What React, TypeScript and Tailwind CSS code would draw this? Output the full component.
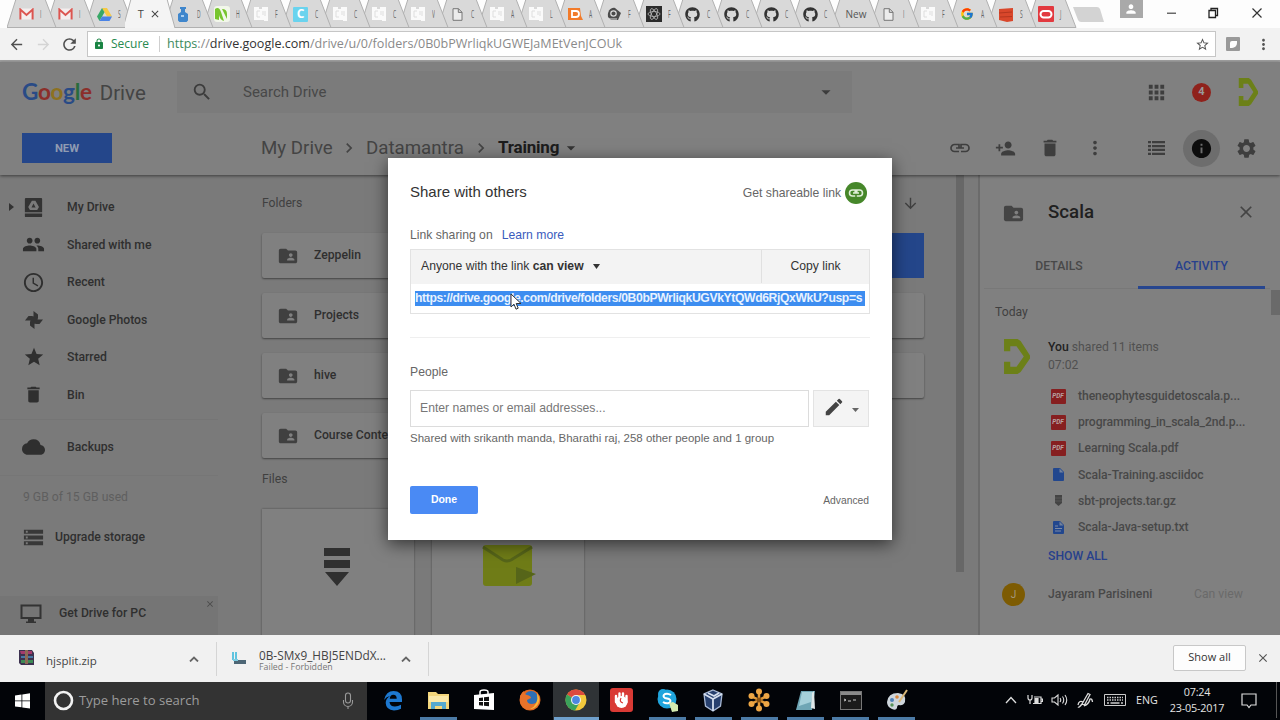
import React from "react";
import {
  MdAccessTime, MdApps, MdArrowDownward, MdArrowDropDown, MdChevronRight, MdClose, MdCloud, MdDelete,
  MdEdit, MdFolderShared, MdInfo, MdLock, MdMoreVert, MdPeople, MdPersonAdd,
  MdSearch, MdSettings, MdStar, MdStorage, MdArrowBack, MdArrowForward, MdRefresh,
  MdStarBorder, MdPerson,
} from "react-icons/md";
import { FaGithub } from "react-icons/fa";
import { FcGoogle } from "react-icons/fc";

/* ---------- Browser tabs ---------- */

function Gmail() {
  return (
    <svg width="15" height="12" viewBox="0 0 15 12">
      <rect x="1" y="0.5" width="13" height="11" fill="#f4eeee" />
      <path d="M1.4 11.5V1.6L7.5 7l6.100-5.400V11.500" fill="none" stroke="#dc5550" strokeWidth="2" />
    </svg>
  );
}
function DriveLogo() {
  return (
    <svg width="15" height="13" viewBox="0 0 15 13">
      <path d="M5 0h5l5 8.600h-5z" fill="#f6c944" />
      <path d="M5 0l2.500 4.300L2.500 13 0 8.600z" fill="#38a867" />
      <path d="M5 8.600h10L12.500 13h-10z" fill="#4a83e6" />
    </svg>
  );
}
function Jar() {
  return (
    <svg width="12" height="15" viewBox="0 0 12 15">
      <path d="M3 0h6v2H8v3l3 2v6.500L9.500 15h-7L1 13.500V7l3-2V2H3z" fill="#3f86cc" />
      <rect x="4" y="8" width="3" height="2" fill="#a8cdf0" />
    </svg>
  );
}
function Leaf() {
  return (
    <svg width="16" height="16" viewBox="0 0 16 16">
      <rect width="16" height="16" rx="3" fill="#f2f7ea" />
      <path d="M1 13V3q4-3 6 3l3 9q-4-1-5-6v5zM8 3q5 0 5 5v5l-3-6z" fill="#77c52e" />
    </svg>
  );
}
function WhitePage() {
  return (
    <svg width="16" height="16" viewBox="0 0 16 16">
      <path d="M1 1h5v2h3V1h6v14h-4v-1H1z" fill="#fafafa" />
      <path d="M4 5h3M4 5v6h3M10 5v4M12 5v5" stroke="#dedede" fill="none" />
    </svg>
  );
}
function CyanC() {
  return (
    <span className="flex h-[15px] w-[15px] items-center justify-center rounded-[1px] bg-[#6ad3ee] text-[12px] font-bold leading-none text-white">
      C
    </span>
  );
}
function Doc() {
  return (
    <svg width="11" height="13" viewBox="0 0 11 13">
      <path d="M1 .7h5.500L10 4.200v8.100H1zM6.300.7v3.700H10" fill="#ececec" stroke="#777" strokeWidth="1" />
    </svg>
  );
}
function Orange() {
  return (
    <svg width="15" height="14" viewBox="0 0 15 14">
      <path d="M0 1h12l1 8 2 4H0z" fill="#f27b2a" />
      <path d="M4 4h4a3 3 0 010 6H4z" fill="none" stroke="#fff" strokeWidth="1.800" />
    </svg>
  );
}
function Swirl() {
  return (
    <svg width="15" height="14" viewBox="0 0 15 14">
      <path d="M1 10C0 4 4 0 8 1l6 5-3 7H4z" fill="#4b4b4b" />
      <circle cx="6.500" cy="6.500" r="2.700" fill="none" stroke="#ddd" strokeWidth="1.200" />
      <path d="M2 12h8" stroke="#ddd" />
    </svg>
  );
}
function Atom() {
  return (
    <svg width="16" height="16" viewBox="0 0 16 16">
      <rect width="16" height="16" fill="#2b2b2b" />
      <g fill="none" stroke="#b5b5b5" strokeWidth=".8">
        <ellipse cx="8" cy="8" rx="6" ry="2.500" />
        <ellipse cx="8" cy="8" rx="6" ry="2.500" transform="rotate(60 8 8)" />
        <ellipse cx="8" cy="8" rx="6" ry="2.500" transform="rotate(120 8 8)" />
      </g>
    </svg>
  );
}
function RedStack() {
  return (
    <svg width="16" height="15" viewBox="0 0 16 15">
      <path d="M1 2l14-1v13l-6 1-8-2z" fill="#d9472b" />
      <path d="M1 6l13-1M2 10l12-.5" stroke="#b5361f" />
    </svg>
  );
}
function Oracle() {
  return (
    <svg width="16" height="16" viewBox="0 0 16 16">
      <rect width="16" height="16" rx="1" fill="#e2393f" />
      <rect x="2.500" y="5" width="11" height="6.500" rx="3.200" fill="none" stroke="#fff" strokeWidth="2" />
    </svg>
  );
}

const gh = <FaGithub size={15} color="#333" />;
const tabs: { icon?: React.ReactNode; label: string; active?: boolean }[] = [
  { icon: <Gmail />, label: "I" }, { icon: <Gmail />, label: "I" }, { icon: <DriveLogo />, label: "S" },
  { label: "T", active: true },
  { icon: <Jar />, label: "D" }, { icon: <Leaf />, label: "H" }, { icon: <WhitePage />, label: "F" },
  { icon: <CyanC />, label: "C" }, { icon: <WhitePage />, label: "C" }, { icon: <WhitePage />, label: "C" },
  { icon: <WhitePage />, label: "V" }, { icon: <Doc />, label: "C" }, { icon: <WhitePage />, label: "A" },
  { icon: <WhitePage />, label: "L" }, { icon: <Orange />, label: "A" }, { icon: <Swirl />, label: "F" },
  { icon: <Atom />, label: "F" }, { icon: gh, label: "C" }, { icon: gh, label: "C" }, { icon: gh, label: "C" },
  { icon: gh, label: "C" }, { label: "New" }, { icon: <Doc />, label: "I" }, { icon: <WhitePage />, label: "F" },
  { icon: <FcGoogle size={14} />, label: "A" }, { icon: <RedStack />, label: "S" }, { icon: <Oracle />, label: "J" },
];

function TabStrip() {
  return (
    <div className="flex h-[28px] shrink-0 items-start bg-[#fdfdfd] pl-[7px] font-['Open_Sans',sans-serif]">
      {tabs.map((t, i) => (
        <div key={i} className="relative h-[28px] w-[39.23px] shrink-0" style={{ zIndex: t.active ? 40 : 30 - i }}>
          <svg className="absolute left-0 top-0" width="51" height="28" viewBox="0 0 51 28">
            <path
              d={t.active ? "M-2 28L6 -1H42L50 28" : "M0 27.500L9 -1H38L49 27.500z"}
              fill={t.active ? "#f4f4f4" : "#d9d9d9"}
              stroke="#b0b0b0"
              strokeWidth="1"
            />
          </svg>
          {t.active ? (
            <div className="relative flex h-[28px] items-center gap-[5px] pl-[13px] text-[11px] text-[#444]">
              <span>T</span>
              <MdClose size={12} color="#444" />
            </div>
          ) : t.icon ? (
            <div className="relative flex h-[28px] items-center text-[10px] text-[#666]">
              <span className="ml-[11px] flex w-[16px] justify-center">{t.icon}</span>
              <span className="ml-[6px] w-[4px] origin-left scale-x-50">{t.label}</span>
            </div>
          ) : (
            <div className="relative flex h-[28px] w-[39px] items-center pl-[15px] text-[10px] text-[#555]">
              {t.label}
            </div>
          )}
        </div>
      ))}
      <svg className="ml-[6px] mt-[6px]" width="33" height="17" viewBox="0 0 33 17">
        <path d="M1 1h24q2 0 3 2l4 13H9q-2 0-3-2z" fill="#d3d3d3" />
      </svg>
      <div className="ml-[15px] flex h-[18px] w-[23px] items-center justify-center bg-[#a9a9a9]">
        <MdPerson size={14} color="#fff" />
      </div>
      <svg className="ml-[23px] mt-[5px]" width="105" height="16" viewBox="0 0 105 16">
        <path d="M1 8.200h9" stroke="#444" strokeWidth="1.200" />
        <path d="M43 5.500h6.500v7h-6.500zM45 5.500V3.500H51.500V10.500H49.500" fill="none" stroke="#222" strokeWidth="1.300" />
        <path d="M86.500 3.500l9 9M95.500 3.500l-9 9" stroke="#333" strokeWidth="1.200" />
      </svg>
    </div>
  );
}

function AddressBar() {
  return (
    <div className="flex h-[34px] shrink-0 items-center border-b-2 border-[#9f9f9f] bg-[#f2f2f2] font-['Open_Sans',sans-serif]">
      <MdArrowBack className="ml-[8px]" size={17} color="#505050" />
      <MdArrowForward className="ml-[10px]" size={17} color="#d4d4d4" />
      <MdRefresh className="ml-[8px]" size={19} color="#505050" />
      <div className="mb-[2px] ml-[8px] mt-[1px] flex h-[26px] w-[1129px] items-center border border-[#c6c6c6] bg-white pt-[1px]">
        <MdLock className="ml-[5px]" size={12} color="#1a8443" />
        <span className="ml-[6px] w-[39px] text-[12px] text-[#288a50]">Secure</span>
        <span className="ml-[9px] h-[16px] w-px bg-[#cfcfcf]" />
        <span className="ml-[7px] whitespace-nowrap text-[12.57px] text-[#8a8a8a]">
          <span className="text-[#3c8a5c]">https</span>://<span className="text-[#333]">drive.google.com</span>/drive/u/0/folders/0B0bPWrliqkUGWEJaMEtVenJCOUk
        </span>
        <MdStarBorder className="ml-auto mr-[5px]" size={15} color="#555" />
      </div>
      <div className="ml-[10px] flex h-[14px] w-[14px] items-center justify-center rounded-[1px] bg-[#999]">
        <span className="h-[7px] w-[7px] rounded-br-[5px] rounded-tl-[2px] bg-white" />
      </div>
      <MdMoreVert className="ml-[15px]" size={17} color="#555" />
    </div>
  );
}

/* ---------- Drive header ---------- */

function Datamantra({ w, h }: { w: number; h: number }) {
  return (
    <svg width={w} height={h} viewBox="0 0 26 34" preserveAspectRatio="none">
      <path d="M1 0h13l3 2 9 14v3l-9 13-3 2H1V22h6v5h6l7-10-7-10H7v5H1z" fill="#6c8018" />
    </svg>
  );
}

function Header() {
  return (
    <div className="relative z-10 h-[113px] shrink-0 bg-[#808080] shadow-[0_1px_3px_rgba(0,0,0,0.5)]">
      <div className="flex h-[60px] items-center">
        <div className="flex w-[155px] items-baseline pl-[22px] leading-none">
          <span className="font-['Lato',sans-serif] text-[22.5px] font-bold tracking-[-0.3px]">
            <span className="text-[#294b86]">G</span><span className="text-[#8b2f2a]">o</span><span className="text-[#8d7120]">o</span><span className="text-[#294b86]">g</span><span className="text-[#286c3c]">l</span><span className="text-[#8b2f2a]">e</span>
          </span>
          <span className="ml-[8px] text-[20.5px] text-[#444]">Drive</span>
        </div>
        <div className="ml-[22px] flex h-[42px] w-[675px] items-center bg-[#7b7b7b]">
          <MdSearch className="ml-[14px]" size={22} color="#3c3c3c" />
          <span className="ml-[30px] text-[15px] text-[#484848]">Search Drive</span>
          <MdArrowDropDown className="ml-auto mr-[15px]" size={22} color="#3c3c3c" />
        </div>
        <MdApps className="ml-[293px]" size={23} color="#3e3e3e" />
        <div className="ml-[24px] flex h-[19px] w-[19px] items-center justify-center rounded-full bg-[#8f221c] text-[11px] font-bold text-[#999]">4</div>
        <div className="ml-[27px]"><Datamantra w={20} h={28} /></div>
      </div>
      <div className="flex h-[52px] items-center">
        <div className="ml-[22px] flex h-[30px] w-[90px] items-center justify-center bg-[#24468a] pt-[2px] text-[11.3px] font-bold text-[#8f9bb2]">NEW</div>
        <div className="ml-[149px] flex items-center text-[18.7px] text-[#444]">
          <span className="w-[71px] whitespace-nowrap">My Drive</span>
          <MdChevronRight className="mx-[7px]" size={20} />
          <span className="w-[98px] whitespace-nowrap">Datamantra</span>
          <MdChevronRight className="mx-[7px]" size={20} />
          <span className="w-[61px] whitespace-nowrap text-[17px] font-bold tracking-[-0.2px] text-[#1c1c1c]">Training</span>
          <MdArrowDropDown className="ml-[2px]" size={20} color="#333" />
        </div>
        <div className="ml-auto flex items-center text-[#3e3e3e]">
          <svg width="20" height="10" viewBox="0 0 20 10" fill="none" stroke="#3e3e3e" strokeWidth="1.700">
            <path d="M9 5V1.500H4.500a3.500 3.500 0 000 7H9M11 5V1.500h4.500a3.500 3.500 0 010 7H11M6 5h8" />
          </svg>
          <MdPersonAdd className="ml-[25px]" size={21} />
          <MdDelete className="ml-[23px]" size={22} />
          <MdMoreVert className="ml-[23px]" size={22} />
          <svg className="ml-[42px]" width="17" height="14" viewBox="0 0 17 14" fill="#3e3e3e">
            <path d="M0 0h3v2.300H0zM4 0H17v2.300H4zM0 3.900h3v2.300H0zM4 3.900H17v2.300H4zM0 7.800h3v2.300H0zM4 7.800H17v2.300H4zM0 11.700h3V14H0zM4 11.700H17V14H4z" />
          </svg>
          <div className="ml-[18px] flex h-[37px] w-[37px] items-center justify-center rounded-full bg-[#6d6d6d]">
            <MdInfo size={23} color="#0d0d0d" />
          </div>
          <MdSettings className="ml-[15px] mr-[22px]" size={23} />
        </div>
      </div>
    </div>
  );
}

/* ---------- Sidebar ---------- */

function DriveDisc() {
  return (
    <svg width="23" height="23" viewBox="0 0 24 24">
      <path fillRule="evenodd" d="M4 2h16a1 1 0 011 1v14H3V3a1 1 0 011-1zm6.300 3L6.500 11.500 8.300 14.500h7.600l1.800-3L14 5zm1.700 2.800L14.200 12H9.900z" fill="#333" />
      <path d="M3 18.200h18V21a1 1 0 01-1 1H4a1 1 0 01-1-1z" fill="#333" />
    </svg>
  );
}
function Pinwheel() {
  return (
    <svg width="20" height="20" viewBox="0 0 20 20" fill="#333">
      <path d="M9.500 10V1L14 4.500V8q0 2-2 2zM10 9.500h9L15.500 14H12q-2 0-2-2zM10.500 10v9L6 15.500V12q0-2 2-2zM10 10.500H1L4.500 6H8q2 0 2 2z" />
    </svg>
  );
}
function Monitor() {
  return (
    <svg className="mb-[3px] ml-[20px]" width="22" height="20" viewBox="0 0 22 20">
      <path d="M1.500 1.500h19v12.500h-19z" fill="none" stroke="#333" strokeWidth="2" />
      <path d="M8 14.500h6v3h2V19H6v-1.500h2z" fill="#333" />
    </svg>
  );
}

const nav = [
  { icon: <DriveDisc />, label: "My Drive" },
  { icon: <MdPeople size={23} />, label: "Shared with me" },
  { icon: <MdAccessTime size={23} />, label: "Recent" },
  { icon: <Pinwheel />, label: "Google Photos" },
  { icon: <MdStar size={22} />, label: "Starred" },
  { icon: <MdDelete size={21} />, label: "Bin" },
];

function NavRow({ icon, label, first }: { icon: React.ReactNode; label: string; first?: boolean }) {
  return (
    <div className="flex h-[37.5px] items-center text-[#2f2f2f]">
      <span className="flex w-[22px] justify-center">
        {first && (
          <svg width="5" height="8" viewBox="0 0 5 8"><path d="M0 0l5 4-5 4z" fill="#333" /></svg>
        )}
      </span>
      <span className="flex w-[23px] justify-center">{icon}</span>
      <span className="ml-[22px] whitespace-nowrap">{label}</span>
    </div>
  );
}

function Sidebar() {
  return (
    <div className="flex w-[218px] shrink-0 flex-col pt-[13.5px] text-[12.2px] font-medium">
      {nav.map((n, i) => <NavRow key={n.label} {...n} first={i === 0} />)}
      <div className="mt-[5px] border-t border-[#757575] pt-[9px]">
        <NavRow icon={<MdCloud size={24} />} label="Backups" />
      </div>
      <div className="mt-[9px] border-t border-[#767676] pl-[23px] pt-[5px] font-normal text-[#5f5f5f]">
        <span className="block h-[32px] leading-[32px]">9 GB of 15 GB used</span>
      </div>
      <div className="mt-[6px] flex h-[37px] items-center text-[#2f2f2f]">
        <MdStorage className="ml-[22px]" size={23} color="#383838" />
        <span className="ml-[10px]">Upgrade storage</span>
      </div>
      <div className="mt-auto flex h-[39px] items-center bg-[#757575] text-[#2f2f2f]">
        <Monitor />
        <span className="mb-[5px] ml-[17px]">Get Drive for PC</span>
        <MdClose className="mb-[24px] ml-auto mr-[3px]" size={10} color="#4b4b4b" />
      </div>
    </div>
  );
}

/* ---------- File area ---------- */

const folders = ["Zeppelin", "", "", "#", "Projects", "", "", "", "hive", "", "", "", "Course Content"];

function Files() {
  return (
    <div className="flex w-[738px] shrink-0 flex-col pl-[44px] text-[12.2px] font-medium text-[#2f2f2f]">
      <div className="flex h-[58px] w-[662px] shrink-0 items-center justify-between pb-px font-normal text-[#404040]">
        <span>Folders</span>
        <MdArrowDownward className="mr-[5px]" size={17} />
      </div>
      <div className="grid w-[662px] shrink-0 grid-cols-4 gap-x-[18.5px] gap-y-[15px]">
        {folders.map((f, i) =>
          f === "#" ? (
            <div key={i} className="h-[45px] bg-[#24468a]" />
          ) : (
            <div key={i} className="flex h-[45px] items-center overflow-hidden rounded-[2px] bg-[#808080] shadow-[0_1px_2px_rgba(0,0,0,0.45)]">
              {f && <MdFolderShared className="ml-[15px] shrink-0" size={22} color="#404040" />}
              <span className="ml-[15px] whitespace-nowrap">{f}</span>
            </div>
          )
        )}
      </div>
      <span className="mt-[13px] h-[16px] shrink-0 font-normal leading-[16px] text-[#404040]">Files</span>
      <div className="mt-[22px] grid h-[130px] w-[662px] shrink-0 grid-cols-4 gap-x-[18.500px]">
        <div className="bg-[#808080] shadow-[0_0_2px_rgba(0,0,0,0.4)]">
          <svg className="ml-[61px] mt-[39px]" width="28" height="38" viewBox="0 0 28 38" fill="#303030">
            <path d="M1 0h26v8H1zM1 12h26v8H1zM2 24h24L14 38z" />
          </svg>
        </div>
        <div className="bg-[#808080] shadow-[0_0_2px_rgba(0,0,0,0.4)]">
          <svg className="ml-[50px] mt-[33px]" width="56" height="46" viewBox="0 0 56 46">
            <rect x="1" y="3" width="49" height="41" rx="3" fill="#6f7c17" />
            <path d="M1 5l20 13q4 2 8 0L50 5" fill="none" stroke="#566519" strokeWidth="3" />
            <path d="M34 25l20 7-20 10z" fill="#566519" />
          </svg>
        </div>
      </div>
    </div>
  );
}

/* ---------- Details panel ---------- */

function Pdf() {
  return (
    <span className="flex h-[15px] w-[15px] items-center justify-center rounded-[1px] bg-[#861f20] text-[6.5px] font-bold italic leading-none text-[#b5a0a0]">PDF</span>
  );
}
function BlueDoc({ lines }: { lines?: boolean }) {
  return (
    <svg width="11" height="13" viewBox="0 0 11 13">
      <path d="M1 0h6l4 4v8a1 1 0 01-1 1H1a1 1 0 01-1-1V1a1 1 0 011-1z" fill="#22478e" />
      <path d="M6.500 0.500L10.500 4.500H6.500z" fill="#71819c" />
      {lines && <path d="M2 5h3M2 7.500h7M2 10h6" stroke="#7c8aa5" />}
    </svg>
  );
}
function TinyArchive() {
  return (
    <svg width="7" height="11" viewBox="0 0 7 11"><path d="M0 0h7v8L3.500 11 0 8z" fill="#444" /><path d="M0 3h7M0 6h7" stroke="#666" strokeWidth=".6" /></svg>
  );
}
const shared = [
  { icon: <Pdf />, name: "theneophytesguidetoscala.p..." },
  { icon: <Pdf />, name: "programming_in_scala_2nd.p..." },
  { icon: <Pdf />, name: "Learning Scala.pdf" },
  { icon: <BlueDoc />, name: "Scala-Training.asciidoc" },
  { icon: <TinyArchive />, name: "sbt-projects.tar.gz" },
  { icon: <BlueDoc lines />, name: "Scala-Java-setup.txt" },
];

function Details() {
  return (
    <div className="ml-[14px] flex min-w-0 flex-1 border-l-2 border-[#6b6b6b] bg-[#808080] text-[12.2px]">
      <div className="flex w-[290px] shrink-0 flex-col">
        <div className="flex h-[73px] items-center pt-px">
          <MdFolderShared className="ml-[22px] mt-[3px]" size={23} color="#444" />
          <span className="ml-[23px] text-[18.7px] font-medium text-[#202020]">Scala</span>
          <MdClose className="ml-auto mr-[14px]" size={20} color="#444" />
        </div>
        <div className="ml-[4px] flex h-[41px] border-b border-[#787878] text-[12.2px] font-medium">
          <span className="flex w-[154px] items-center justify-center pb-[4px] pr-[4px] text-[#484848]">DETAILS</span>
          <span className="-mb-px flex w-[127px] items-center justify-center border-b-[3px] border-[#27468f] pb-[2px] text-[#27408c]">ACTIVITY</span>
        </div>
        <span className="ml-[15px] mt-[14px] h-[18px] leading-[18px] text-[#404040]">Today</span>
        <div className="mt-[17px] flex">
          <div className="ml-[23px] mt-[1px]"><Datamantra w={27} h={35} /></div>
          <div className="ml-[18px] flex flex-col leading-[18px] text-[#505050]">
            <span><span className="font-medium text-[#222]">You</span> shared 11 items</span>
            <span>07:02</span>
          </div>
        </div>
        <div className="mt-[9px]">
          {shared.map((s) => (
            <div key={s.name} className="flex h-[26.200px] items-center font-medium text-[#484848]">
              <span className="ml-[70px] flex w-[16px] justify-center">{s.icon}</span>
              <span className="ml-[12px] whitespace-nowrap tracking-[-0.08px]">{s.name}</span>
            </div>
          ))}
        </div>
        <span className="ml-[68px] mt-[7px] h-[18px] font-medium leading-[18px] text-[#27408c]">SHOW ALL</span>
        <div className="mt-[18px] flex h-[23px] items-center">
          <span className="ml-[22px] flex h-[23px] w-[23px] items-center justify-center rounded-full bg-[#7d5b02] text-[10px] text-[#a59a80]">J</span>
          <span className="ml-[23px] w-[146px] font-medium text-[#484848]">Jayaram Parisineni</span>
          <span className="text-[#6a6a6a]">Can view</span>
        </div>
      </div>
      <div className="ml-auto mt-[115px] h-[25px] w-[9px] bg-[#6a6a6a]" />
    </div>
  );
}

/* ---------- Share dialog ---------- */

function ShareDialog() {
  return (
    <div className="absolute left-[388px] top-[158px] z-20 flex h-[382px] w-[504px] flex-col bg-white px-[22px] font-['Liberation_Sans',Arial,sans-serif] text-[12.2px] text-[#666] shadow-[0_4px_16px_rgba(0,0,0,0.6)]">
      <div className="mt-[22px] flex h-[26px] items-center justify-between">
        <span className="mb-[2px] text-[15px] text-[#333]">Share with others</span>
        <span className="flex items-center gap-[4px]">
          Get shareable link
          <span className="mr-[3px] flex h-[22px] w-[22px] items-center justify-center rounded-full bg-[#46872a]">
            <svg width="16" height="10" viewBox="0 0 16 10" fill="none" stroke="#dfeed8" strokeWidth="1.600">
              <path d="M7.200 5V2H4.500a3 3 0 000 6h2.700M8.800 5V2h2.700a3 3 0 010 6H8.800M5 5h6" />
            </svg>
          </span>
        </span>
      </div>
      <div className="mt-[20px] flex h-[18px] items-center gap-[9px] pt-px">
        <span>Link sharing on</span>
        <span className="text-[#3a5bbd]">Learn more</span>
      </div>
      <div className="mt-[5px] h-[65px] w-[460px] shrink-0 border border-[#e2e2e2]">
        <div className="flex h-[34px] items-center bg-[#f3f3f3] pb-px text-[#333]">
          <span className="ml-[10px] whitespace-nowrap">Anyone with the link <b>can view</b></span>
          <svg className="ml-[9px]" width="7" height="5" viewBox="0 0 7 5"><path d="M0 0h7L3.500 5z" fill="#333" /></svg>
          <span className="ml-auto flex h-[33px] w-[108px] items-center justify-center border-l border-[#e0e0e0]">Copy link</span>
        </div>
        <div className="flex h-[29px] items-center pl-[4px]">
          <span className="w-[450px] whitespace-nowrap bg-[#3d8df0] text-[12.2px] font-bold leading-[15px] tracking-[-0.39px] text-[#e8f2ff]">
            https://drive.google.com/drive/folders/0B0bPWrliqkUGVkYtQWd6RjQxWkU?usp=s
          </span>
        </div>
      </div>
      <div className="mt-[23px] border-t border-[#efefef]" />
      <span className="mt-[25px] h-[18px] leading-[18px]">People</span>
      <div className="mt-[9px] flex h-[37px] shrink-0 justify-between">
        <div className="flex w-[399px] items-center border border-[#dcdcdc] pb-[1px] pl-[9px] text-[#777]">Enter names or email addresses...</div>
        <div className="mr-px flex w-[56px] items-center border border-[#e3e3e3] bg-[#f4f4f4] pb-[3px]">
          <MdEdit className="ml-[9px]" size={22} color="#444" />
          <svg className="ml-[7px] mt-[5px]" width="7" height="4" viewBox="0 0 7 4"><path d="M0 0h7L3.500 4z" fill="#666" /></svg>
        </div>
      </div>
      <span className="mt-[4px] h-[15px] whitespace-nowrap text-[11.480px] leading-[15px]">Shared with srikanth manda, Bharathi raj, 258 other people and 1 group</span>
      <div className="mt-[40px] flex h-[28px] items-center justify-between">
        <span className="flex h-[28px] w-[68px] items-center justify-center rounded-[2px] bg-[#4a8af4] text-[10.500px] font-bold text-white">Done</span>
        <span className="mr-[1px] pt-px text-[10.300px]">Advanced</span>
      </div>
    </div>
  );
}

/* ---------- Download shelf and taskbar ---------- */

function Chevron() {
  return <svg width="10" height="6" viewBox="0 0 10 6"><path d="M1 5.500l4-4 4 4" fill="none" stroke="#666" strokeWidth="1.800" /></svg>;
}

function Downloads() {
  return (
    <div className="flex h-[47px] shrink-0 items-center bg-[#f1f1f1] font-['Open_Sans',sans-serif] text-[#444]">
      <svg className="mb-[3px] ml-[19px]" width="15" height="17" viewBox="0 0 15 17">
        <path d="M0 1h13l2 3v12H2L0 14z" fill="#3d3250" />
        <path d="M1 2h12v3H2z" fill="#a33b6c" /><path d="M2 7h12v2H2z" fill="#4779a6" /><path d="M2 11h12v3H2z" fill="#3d8a55" />
        <path d="M6 1h3v14H6z" fill="#8d6a55" />
      </svg>
      <span className="ml-[12px] w-[143px] pt-[5px] text-[11.500px]">hjsplit.zip</span>
      <Chevron />
      <span className="ml-[17px] h-[34px] w-px bg-[#d5d5d5]" />
      <svg className="ml-[15px]" width="14" height="14" viewBox="0 0 14 14">
        <path d="M0 0h2v8H0zM3 0h2v8H3z" fill="#5fc4df" /><path d="M2 8h12v4H2z" fill="#4d6675" /><path d="M1 7h5v2H1z" fill="#7dcbe0" />
      </svg>
      <div className="ml-[13px] flex w-[142px] flex-col whitespace-nowrap pt-[4px]">
        <span className="text-[11.800px] leading-[13px]">0B-SMx9_HBJ5ENDdX...</span>
        <span className="text-[8.800px] leading-[11px] text-[#777]">Failed - Forbidden</span>
      </div>
      <Chevron />
      <span className="ml-[17px] h-[34px] w-px bg-[#d5d5d5]" />
      <span className="mb-[2px] ml-auto flex h-[26px] w-[73px] items-center justify-center rounded-[2px] border border-[#c8c8c8] bg-[#fdfdfd] text-[11px] text-[#333]">Show all</span>
      <MdClose className="mb-[2px] ml-[10px] mr-[10px]" size={14} color="#555" />
    </div>
  );
}

function Edge() {
  return (
    <svg width="20" height="21" viewBox="0 0 20 21">
      <path d="M1 10Q3 1 10.500 1 19 1 19 9.500V12H6.500q.5 4.500 5.500 4.500 3 0 6-1.800v4Q15 20.500 11 20.500 3 20 2.700 13 2.700 8.500 7 6 3.500 6.500 1 10zM6.700 8.700h7Q13.700 4.800 10.300 4.800 7.200 4.800 6.700 8.700z" fill="#1d78cf" />
    </svg>
  );
}
function Explorer() {
  return (
    <svg width="21" height="19" viewBox="0 0 21 19">
      <path d="M0 1h8l2 2h11v15H0z" fill="#f3d67c" /><path d="M1 5h19v6H1z" fill="#fbe9a9" />
      <path d="M3 11h15v7h-4v-3H7v3H3z" fill="#55a9cf" />
    </svg>
  );
}
function Store() {
  return (
    <svg width="20" height="22" viewBox="0 0 20 22">
      <path d="M0 6l20-2v17L0 20z" fill="#fff" /><path d="M6 6V3q0-2 4-2t4 2v2" fill="none" stroke="#fff" strokeWidth="1.500" />
      <path d="M5 9l4-.5V12H5zM10 8.300l5-.5V12h-5zM5 13h4v3.700L5 16.300zM10 13h5v4.300l-5-.5z" fill="#111" />
    </svg>
  );
}
function Firefox() {
  return (
    <svg width="22" height="22" viewBox="0 0 22 22">
      <circle cx="11" cy="11" r="10.500" fill="#e2671f" /><circle cx="12" cy="9" r="7" fill="#2f6fb5" />
      <path d="M1 7q2-4 4-5 0 3 3 4 4 1 4 3l-4 2q0 4 5 4 6 0 8-8 1 9-6 13Q4 23 1 13z" fill="#e8722a" />
      <path d="M18 4q4 6 1 11-3 5-8 5 9-4 7-16z" fill="#f6b93b" />
    </svg>
  );
}
function Chrome() {
  return (
    <svg width="22" height="22" viewBox="0 0 22 22">
      <circle cx="11" cy="11" r="10.500" fill="#f3c93c" />
      <path d="M11 11L2 5.500A10.500 10.500 0 0120.200 6H11z" fill="#dc4a3d" />
      <path d="M11 11L1.900 5.600A10.500 10.500 0 0010 21.500l4.600-8z" fill="#3ba25b" />
      <circle cx="11" cy="11" r="5" fill="#f2f2f2" /><circle cx="11" cy="11" r="3.900" fill="#4d87e0" />
    </svg>
  );
}
function Hand() {
  return (
    <svg width="23" height="24" viewBox="0 0 23 24">
      <rect width="23" height="24" rx="3" fill="#d93a35" />
      <circle cx="11.500" cy="14" r="6" fill="#fff" />
      <path d="M6 14V8M9.500 11V5.500M13 11V5.500M16.500 14V8" stroke="#fff" strokeWidth="2.400" strokeLinecap="round" />
      <path d="M11 10q-2 4 2 5" stroke="#d93a35" strokeWidth="1.200" fill="none" />
    </svg>
  );
}
function Skype() {
  return (
    <svg width="24" height="24" viewBox="0 0 24 24">
      <circle cx="11" cy="11" r="9.500" fill="#20a5dd" /><circle cx="7" cy="6" r="5" fill="#20a5dd" />
      <path d="M15 7q-3-2-6-1-3 2 0 4l4 1q3 2 0 4-3 1-6-1" fill="none" stroke="#fff" strokeWidth="2" />
      <path d="M13 15l4-1 5 3v6l-6 1z" fill="#d6ecb0" />
    </svg>
  );
}
function VBox() {
  return (
    <svg width="20" height="23" viewBox="0 0 20 23">
      <path d="M10 1l9 4-1.500 12L10 22l-7.500-5L1 5z" fill="#27406e" stroke="#a9bad6" strokeWidth="1.300" />
      <path d="M1 5l9 5 9-5M10 10v12M5 4l6 3 5-3" fill="none" stroke="#d5dfee" strokeWidth="1.800" />
    </svg>
  );
}
function Flower() {
  return (
    <svg width="22" height="24" viewBox="0 0 22 24">
      <path d="M11 3v18M3 8l16 8M19 8L3 16" stroke="#e39a38" strokeWidth="2.500" />
      <g fill="#eda645">
        <circle cx="11" cy="3.500" r="3" /><circle cx="11" cy="20.500" r="3" /><circle cx="3.500" cy="8" r="3" />
        <circle cx="18.500" cy="8" r="3" /><circle cx="3.500" cy="16" r="3" /><circle cx="18.500" cy="16" r="3" />
      </g>
      <circle cx="11" cy="12" r="2.500" fill="#8c5514" />
    </svg>
  );
}
function Notebook() {
  return (
    <svg width="21" height="21" viewBox="0 0 21 21">
      <path d="M6 1h14l-3 19H1z" fill="#6fa6b5" /><path d="M7 2h11l-2 10L4 16z" fill="#a5d0da" /><path d="M17 3l2-2 1 18-4-1z" fill="#dfe7e8" />
    </svg>
  );
}
function Terminal() {
  return (
    <svg width="22" height="19" viewBox="0 0 22 19">
      <rect x=".5" y=".5" width="21" height="18" fill="#1b1b1b" stroke="#777" /><path d="M1 1h20v3H1z" fill="#8a8a8a" />
      <path d="M4 8l2 1-2 1M8 10h3M13 9h3" stroke="#ccc" fill="none" />
    </svg>
  );
}
function Palette() {
  return (
    <svg width="24" height="24" viewBox="0 0 24 24">
      <path d="M2 14Q3 5 13 5q9 1 7 9-2 4-6 3-2 0-2 3-1 3-5 1-5-2-5-7z" fill="#ced6dc" />
      <circle cx="7" cy="12" r="2" fill="#4d80b8" /><circle cx="12" cy="9" r="1.800" fill="#d9883f" /><circle cx="7" cy="17" r="1.700" fill="#57945b" />
      <path d="M22 2L14 14" stroke="#d9b878" strokeWidth="2" />
    </svg>
  );
}

const apps: { icon: React.ReactNode; run?: boolean; on?: boolean }[] = [
  { icon: <Edge /> },
  { icon: <Explorer />, run: true },
  { icon: <Store /> },
  { icon: <Firefox /> },
  { icon: <Chrome />, run: true, on: true },
  { icon: <Hand /> },
  { icon: <Skype />, run: true },
  { icon: <VBox />, run: true },
  { icon: <Flower />, run: true },
  { icon: <Notebook />, run: true },
  { icon: <Terminal />, run: true },
  { icon: <Palette />, run: true },
];

function Taskbar() {
  return (
    <div className="flex h-[38px] shrink-0 items-center bg-[#020408] font-['Open_Sans',sans-serif] text-[#e5e5e5]">
      <svg className="ml-[15px]" width="15" height="16" viewBox="0 0 15 16" fill="#fff">
        <path d="M0 2.500l6.500-1V7.500H0zM7.300 1.400L15 .2v7.300H7.300zM0 8.300h6.500v6L0 13.400zM7.300 8.300H15v7.300l-7.700-1.100z" />
      </svg>
      <div className="ml-[15px] flex h-[38px] w-[322px] items-center bg-[#333] pb-px">
        <svg className="ml-[8px]" width="21" height="21" viewBox="0 0 21 21"><circle cx="10.500" cy="10.500" r="8.500" fill="none" stroke="#f2f2f2" strokeWidth="2.600" /></svg>
        <span className="ml-[5px] text-[13.100px] text-[#9c9c9c]">Type here to search</span>
        <svg className="ml-auto mr-[13px]" width="12" height="18" viewBox="0 0 12 18" fill="none" stroke="#999" strokeWidth="1.100">
          <rect x="3.500" y="1" width="5" height="10" rx="2.500" /><path d="M1.500 8v2a4.500 4.500 0 009 0V8M6 14.500V17" />
        </svg>
      </div>
      <div className="ml-[3px] flex h-[38px]">
        {apps.map((a, i) => (
          <div key={i} className={a.on ? "flex h-[38px] w-[45.800px] flex-col items-center bg-[#2f3336]" : "flex h-[38px] w-[45.800px] flex-col items-center"}>
            <span className="flex h-[35px] items-center pt-[1px]">{a.icon}</span>
            {a.run && <span className={a.on ? "h-[3px] w-[45px] bg-[#6fa0cc]" : "h-[3px] w-[37px] bg-[#4c7ba6]"} />}
          </div>
        ))}
      </div>
      <div className="ml-auto flex h-[38px] items-center pb-[2px]">
        <svg width="12" height="8" viewBox="0 0 12 8"><path d="M1 7l5-5.500L11 7" fill="none" stroke="#ddd" strokeWidth="1.300" /></svg>
        <svg className="ml-[10px]" width="16" height="12" viewBox="0 0 16 12" fill="none" stroke="#ddd" strokeWidth="1.200">
          <path d="M7 3h7v6.500H6M14 5h1.500v2.500H14M1 1v3q0 2 2 2t2-2V1M3 6v4" /><path d="M8 4.500h3v4H8z" fill="#ddd" />
        </svg>
        <svg className="ml-[8px]" width="17" height="14" viewBox="0 0 17 14" fill="none" stroke="#ddd" strokeWidth="1.100">
          <path d="M1 5h2.500L7 2v10L3.500 9H1zM9 5q1.500 2 0 4M11.500 3.500q2.500 3.500 0 7M14 2q3.500 5 0 10" />
        </svg>
        <svg className="ml-[9px]" width="17" height="17" viewBox="0 0 17 17" fill="none" stroke="#ddd" strokeWidth="1.300">
          <path d="M5 12L11 1.500l2 1L7.500 13zM1 13q1-5 5-3M5 12q-3 4-4 3M7 14q5-2 6-7 2-1 2.500 3" />
        </svg>
        <svg className="ml-[10px]" width="22" height="14" viewBox="0 0 22 14" fill="none" stroke="#ccc">
          <path d="M.5 1.500h21v11H.5z" /><path d="M3 4.500h16M3 7h16" strokeDasharray="1.500 1" strokeWidth="1.400" /><path d="M3 10h2M6.500 10h9M17 10h2" strokeWidth="1.300" />
        </svg>
        <span className="ml-[10px] w-[22px] text-[10.700px]">ENG</span>
        <div className="ml-[10px] flex w-[58px] flex-col items-center whitespace-nowrap text-[10.800px] leading-[16px] tracking-[-0.2px]">
          <span>07:24</span>
          <span>23-05-2017</span>
        </div>
        <svg className="ml-[15px]" width="16" height="17" viewBox="0 0 16 17" fill="none" stroke="#ddd" strokeWidth="1.200">
          <path d="M1 2h14v11h-5l-2 2.500L6 13H1z" />
        </svg>
        <span className="ml-[19px] mr-[3px] h-[36px] w-px bg-[#555]" />
      </div>
    </div>
  );
}

export default function App() {
  return (
    <div className="relative flex h-[720px] w-[1280px] flex-col overflow-hidden bg-[#7a7a7a] font-['Roboto',sans-serif]">
      <TabStrip />
      <AddressBar />
      <Header />
      <div className="flex h-[460px] shrink-0 overflow-hidden">
        <Sidebar />
        <Files />
        <div className="h-[397px] w-[8px] shrink-0 bg-[#676767]" />
        <Details />
      </div>
      <Downloads />
      <Taskbar />
      <ShareDialog />
      <svg className="absolute left-[510px] top-[293px] z-30" width="12" height="18" viewBox="0 0 12 18">
        <path d="M1 1v13l3-2.800 2 5 2.200-1-2-4.700H11z" fill="#fff" stroke="#333" strokeWidth="1" />
      </svg>
    </div>
  );
}
